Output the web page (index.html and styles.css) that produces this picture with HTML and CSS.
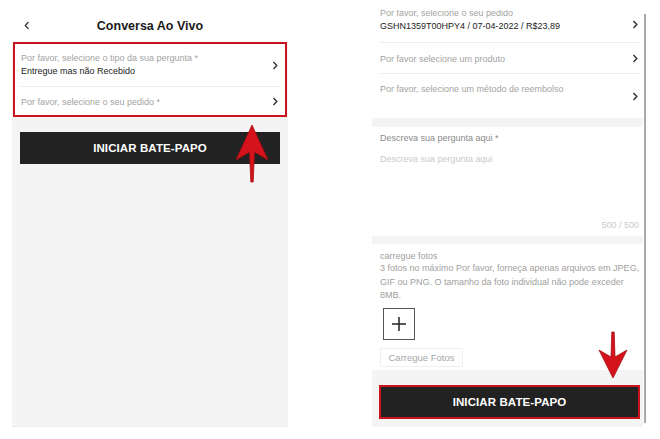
FILE: index.html
```html
<!DOCTYPE html>
<html lang="pt">
<head>
    <meta charset="UTF-8">
    <meta name="viewport" content="width=device-width, initial-scale=1.0">
    <title>Conversa Ao Vivo</title>
    <link rel="stylesheet" href="styles.css">
</head>
<body>
    <div class="page">
        <!-- tela 1: início da conversa -->
        <section class="panel panel-left">
            <header class="topbar">
                <svg class="back" width="6" height="9" viewBox="0 0 6 9"><path d="M4.5 1 L1.2 4.5 L4.5 8" fill="none" stroke="#333" stroke-width="1.2"/></svg>
                <h1>Conversa Ao Vivo</h1>
            </header>
            <div class="card highlight">
                <div class="row">
                    <div class="row-text">
                        <div class="label">Por favor, selecione o tipo da sua pergunta *</div>
                        <div class="value">Entregue mas não Recebido</div>
                    </div>
                    <svg class="chev" width="6" height="9" viewBox="0 0 6 9"><path d="M1.5 1 L4.8 4.5 L1.5 8" fill="none" stroke="#333" stroke-width="1.4"/></svg>
                </div>
                <div class="row row-last">
                    <div class="row-text">
                        <div class="label">Por favor, selecione o seu pedido *</div>
                    </div>
                    <svg class="chev" width="6" height="9" viewBox="0 0 6 9"><path d="M1.5 1 L4.8 4.5 L1.5 8" fill="none" stroke="#333" stroke-width="1.4"/></svg>
                </div>
            </div>
            <button class="start">INICIAR BATE-PAPO</button>
        </section>

        <!-- tela 2: formulário completo -->
        <section class="panel panel-right">
            <div class="viewport">
                <div class="group orders">
                    <div class="row r1">
                        <div class="row-text">
                            <div class="label">Por favor, selecione o seu pedido</div>
                            <div class="value">GSHN1359T00HPY4 / 07-04-2022 / R$23,89</div>
                        </div>
                        <svg class="chev" width="6" height="9" viewBox="0 0 6 9"><path d="M1.5 1 L4.8 4.5 L1.5 8" fill="none" stroke="#333" stroke-width="1.4"/></svg>
                    </div>
                    <div class="row r2">
                        <div class="row-text">
                            <div class="label">Por favor selecione um produto</div>
                        </div>
                        <svg class="chev" width="6" height="9" viewBox="0 0 6 9"><path d="M1.5 1 L4.8 4.5 L1.5 8" fill="none" stroke="#333" stroke-width="1.4"/></svg>
                    </div>
                    <div class="row r3">
                        <div class="row-text">
                            <div class="label">Por favor, selecione um método de reembolso</div>
                        </div>
                        <svg class="chev" width="6" height="9" viewBox="0 0 6 9"><path d="M1.5 1 L4.8 4.5 L1.5 8" fill="none" stroke="#333" stroke-width="1.4"/></svg>
                    </div>
                </div>

                <div class="group question">
                    <div class="q-title">Descreva sua pergunta aqui *</div>
                    <div class="q-placeholder">Descreva sua pergunta aqui</div>
                    <div class="q-count">500 / 500</div>
                </div>

                <div class="group upload">
                    <div class="up-title">carregue fotos</div>
                    <div class="up-desc">3 fotos no máximo Por favor, forneça apenas arquivos em JPEG,<br>GIF ou PNG. O tamanho da foto individual não pode exceder<br>8MB.</div>
                    <div class="add-box">
                        <svg width="16" height="16" viewBox="0 0 16 16"><path d="M8 1 V15 M1 8 H15" stroke="#222" stroke-width="1.5"/></svg>
                    </div>
                    <div class="up-tip">Carregue Fotos</div>
                </div>

                <div class="bottom">
                    <button class="start marked">INICIAR BATE-PAPO</button>
                </div>
            </div>
        </section>
        <div class="scrollbar"></div>
    </div>

    <!-- setas vermelhas de destaque -->
    <svg class="arrows" width="660" height="439" viewBox="0 0 660 439">
        <path d="M252 125 L268 160 L254.5 152 L253.2 182 L250.8 182 L249.5 152 L236 160 Z" fill="#d3121b" stroke="#a80c12" stroke-width="0.8"/>
        <path d="M613 378 L627 350 L615 357 L614.2 332 L611.8 332 L611 357 L599 350 Z" fill="#d3121b" stroke="#a80c12" stroke-width="0.8"/>
    </svg>
</body>
</html>
```

FILE: styles.css
```css
body {
    margin: 0;
    background: #fff;
    font-family: "Liberation Sans", Arial, Helvetica, sans-serif;
}
.page {
    display: flex;
    align-items: flex-start;
    height: 439px;
}
.panel {
    display: flex;
    flex-direction: column;
}
.panel-left {
    margin-left: 12px;
    width: 276px;
    height: 426px;
    background: #f4f4f4;
    border-bottom: 1px solid #ebebeb;
}
.topbar {
    background: #fff;
    height: 42px;
    display: flex;
    justify-content: center;
    position: relative;
}
.topbar h1 {
    margin: 18px 0 0;
    font-size: 12.5px;
    line-height: 16px;
    color: #1a1a1a;
}
.back {
    position: absolute;
    left: 12px;
    top: 21px;
}
.card {
    background: #fff;
}
.highlight {
    margin: 0 1px;
    border: 2px solid #c8141c;
}
.row {
    display: flex;
    align-items: center;
    justify-content: space-between;
    border-bottom: 1px solid #eeeeee;
}
.label, .value {
    font-size: 9px;
    line-height: 12px;
    white-space: nowrap;
}
.label {
    color: #a3a3a3;
}
.value {
    margin-top: 1px;
    color: #222;
}
.chev {
    flex: none;
    margin-right: 2px;
}
.highlight .row {
    margin: 0 5px;
    padding-left: 1px;
}
.highlight .row-text {
    padding: 8px 0 9px;
}
.highlight .row-last {
    border-bottom: none;
}
.highlight .row-last .row-text {
    padding: 9px 0 7px;
}
.start {
    display: block;
    margin: 15px 8px 0;
    height: 32px;
    border: none;
    background: #222;
    color: #fff;
    font-family: inherit;
    font-weight: bold;
    font-size: 11.5px;
    letter-spacing: 0.1px;
}

/* segunda tela */
.panel-right {
    margin-left: 84px;
    width: 271px;
    height: 417px;
    padding-top: 10px;
    background: #fff;
}
.viewport {
    flex: 1;
    overflow: hidden;
    background: #f4f4f4;
    display: flex;
    flex-direction: column;
}
.group {
    background: #fff;
}
.orders {
    margin-top: -3px;
}
.orders .row {
    margin: 0 3px 0 8px;
}
.orders .r1 .row-text {
    padding: 0 0 10px;
}
.orders .value {
    margin-top: 1px;
}
.orders .r2 .row-text {
    padding: 10px 0 8px;
}
.orders .r3 {
    border-bottom: none;
}
.orders .r3 .row-text {
    padding: 9px 0 23px;
}
.question {
    margin-top: 9px;
    padding: 5px 4px 5px 8px;
    font-size: 9px;
    line-height: 12px;
}
.q-title {
    color: #8a8a8a;
}
.q-placeholder {
    margin-top: 9px;
    color: #cacaca;
}
.q-count {
    margin-top: 54px;
    text-align: right;
    color: #cacaca;
}
.upload {
    margin-top: 8px;
    padding: 6px 4px 3px 8px;
    font-size: 9px;
    color: #a0a0a0;
}
.up-title {
    line-height: 12px;
}
.up-desc {
    line-height: 13.5px;
    white-space: nowrap;
}
.add-box {
    margin: 5px 0 0 3px;
    width: 30px;
    height: 30px;
    border: 1px solid #555;
    display: flex;
    align-items: center;
    justify-content: center;
}
.up-tip {
    margin-top: 8px;
    width: 81px;
    height: 17px;
    border: 1px solid #efefef;
    line-height: 17px;
    text-align: center;
    color: #a8a8a8;
    font-size: 9.5px;
}
.bottom {
    flex: 1;
    padding-top: 15px;
}
.start.marked {
    margin: 0 3px 0 7px;
    width: 261px;
    height: 34px;
    border: 2px solid #c8141c;
}
.scrollbar {
    margin: 14px 0 0 1px;
    width: 2px;
    height: 409px;
    background: #a9a9a9;
}
.arrows {
    position: absolute;
    left: 0;
    top: 0;
    pointer-events: none;
}
```
